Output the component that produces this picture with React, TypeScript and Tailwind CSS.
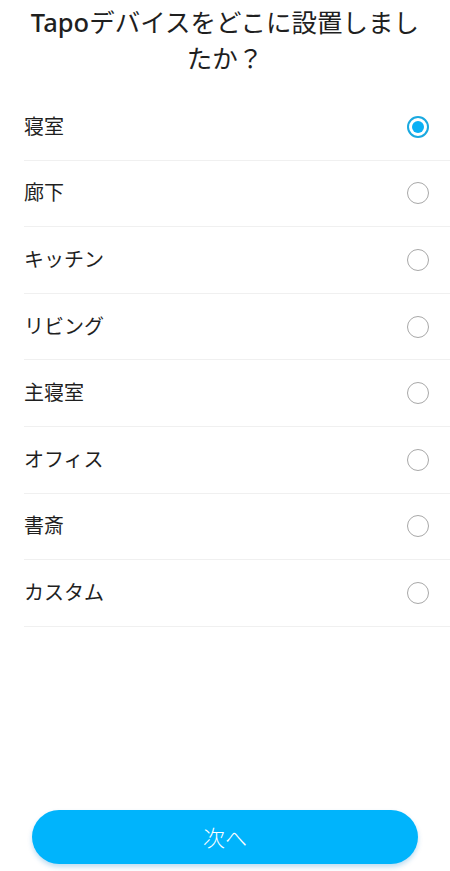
import React, { useState } from 'react';

const rooms = ['寝室', '廊下', 'キッチン', 'リビング', '主寝室', 'オフィス', '書斎', 'カスタム'];

const Radio: React.FC<{ checked: boolean }> = ({ checked }) => (
    checked ? (
        <span className="flex size-[22px] items-center justify-center rounded-full border-2 border-[#1aa9e0]">
            <span className="size-[12px] rounded-full bg-[#0ab0f5]" />
        </span>
    ) : (
        <span className="size-[22px] rounded-full border-[1.5px] border-[#a8a8a8]" />
    )
);

const App: React.FC = () => {
    const [selected, setSelected] = useState(0);

    return (
        <div
            className="flex h-[871px] w-[450px] flex-col bg-white text-[#1f1f1f]"
            style={{ fontFamily: '"Noto Sans", "Noto Sans CJK JP", sans-serif' }}
        >
            {/* タイトル */}
            <h1 className="pt-[4px] text-center text-[25.5px] font-normal leading-[36px]">
                <span className="font-medium">Tapo</span>デバイスをどこに設置しまし<br />たか？
            </h1>

            {/* 部屋リスト */}
            <ul className="mt-[18px] pl-6">
                {rooms.map((r, i) => (
                    <li
                        key={r}
                        onClick={() => setSelected(i)}
                        className="flex h-[66.6px] items-center justify-between border-b border-[#f0f0f0] pr-[21px]"
                    >
                        <span className="text-[20px] font-normal leading-none">{r}</span>
                        <Radio checked={selected === i} />
                    </li>
                ))}
            </ul>

            <div className="flex-1" />

            {/* 次へ */}
            <div className="px-8 pb-[7px]">
                <button className="h-[54px] w-full rounded-full bg-[#00b4fc] text-[22px] font-light text-white shadow-[0_3px_5px_rgba(0,120,200,0.25)]">
                    次へ
                </button>
            </div>
        </div>
    );
};

export default App;
